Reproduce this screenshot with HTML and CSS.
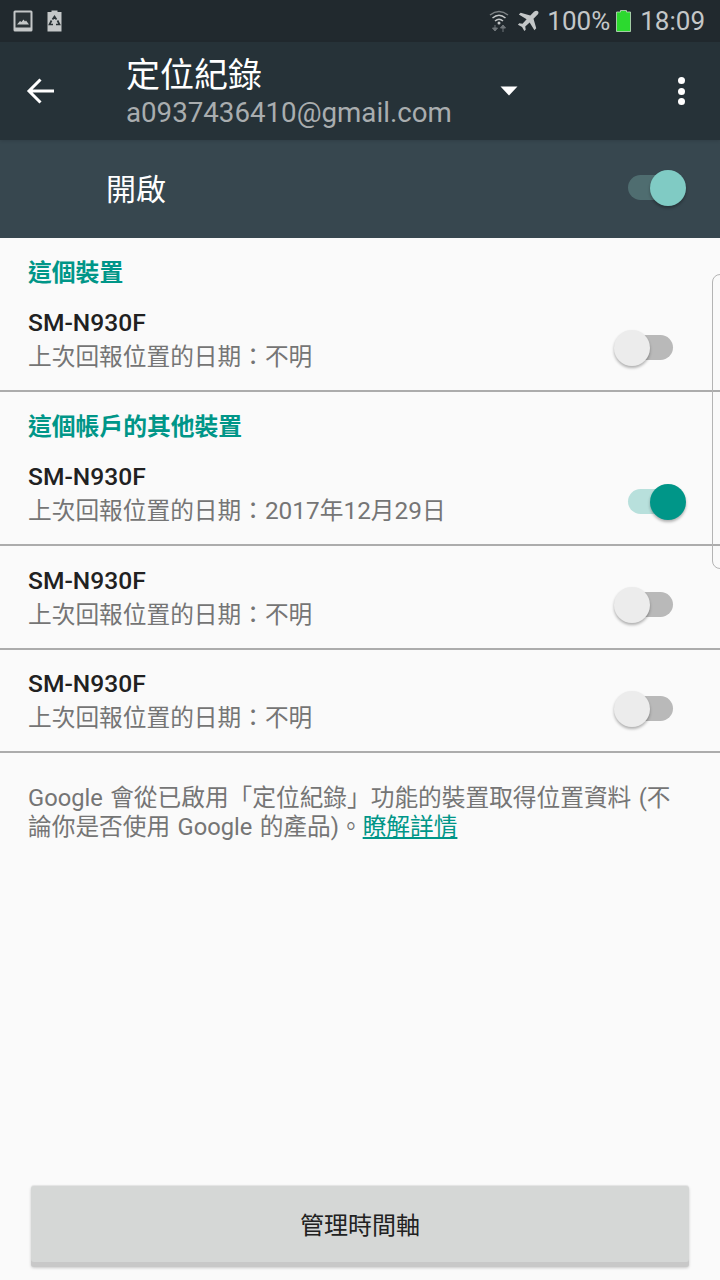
FILE: index.html
```html
<!DOCTYPE html>
<html lang="zh-Hant">
<head>
<meta charset="utf-8">
<title>定位紀錄</title>
<link rel="stylesheet" href="styles.css">
</head>
<body>
<div class="screen">
  <div class="statusbar">
    <div class="status-left">
      <svg class="ic-photo" width="20" height="22" viewBox="0 0 20 22"><rect x="0.500" y="0.500" width="19" height="21" rx="1.500" fill="#c4c7c8"/><rect x="2.500" y="2.500" width="15" height="15" fill="#2a3236"/><path d="M4 14.500 L7 11 L8.500 12 L10.500 9.500 L12 11.500 L13 10.500 L16 14.500Z" fill="#c4c7c8"/></svg>
      <svg class="ic-batt" width="15" height="22" viewBox="0 0 15 22"><path d="M4.500 0.500h6v1.500h4v19.500h-14v-19.500h4z" fill="#c4c7c8"/><path d="M5.500 9.500L7.500 6.500L9.500 9.500M10.500 10.500L12.500 14.500H9M6 14.500H2.500L4.500 10.500" fill="none" stroke="#2a3236" stroke-width="1.700"/></svg>
    </div>
    <div class="status-right">
      <svg class="ic-wifi" width="20" height="24" viewBox="0 0 20 24"><path d="M1 6 Q10 -1 19 6" fill="none" stroke="#7d8285" stroke-width="1.500"/><path d="M3.500 9 Q10 3.500 16.500 9" fill="none" stroke="#c4c7c8" stroke-width="1.500"/><path d="M6 12 Q10 8.500 14 12" fill="none" stroke="#c4c7c8" stroke-width="1.500"/><circle cx="10" cy="14" r="1.500" fill="#c4c7c8"/><path d="M6 16v5M3.500 19l2.500 3 2.500-3z" fill="#70767a" stroke="#70767a"/><path d="M14 23v-5M11.500 19l2.500-3 2.500 3z" fill="#70767a" stroke="#70767a"/></svg>
      <svg class="ic-plane" width="22" height="22" viewBox="0 0 24 24"><path d="M23 1.500c-1-1-3.200-.8-4.500.5l-4 4L4 3 2 5l8.500 5.200L6 15l-3.500-.5L1 16l4.500 2.500L8 23l1.500-1.500L9 18l4.800-4.500L19 22l2-2-3-10.500 4-4c1.300-1.300 2-3 1-4z" fill="#c4c7c8"/></svg>
      <span class="status-pct">100%</span>
      <svg class="ic-charge" width="15" height="22" viewBox="0 0 15 22"><path d="M4.500 0.500h6v1.500h4v19.500h-14v-19.500h4z" fill="#2cd92f" stroke="#c4e0c4" stroke-width="0.800"/></svg>
      <span class="status-time">18:09</span>
    </div>
  </div>

  <header class="toolbar">
    <svg class="ic-back" width="30" height="28" viewBox="0 0 30 28"><path d="M28 14H4M14.500 2.500L3 14l11.500 11.500" fill="none" stroke="#fff" stroke-width="3"/></svg>
    <div class="titles">
      <div class="title">定位紀錄</div>
      <div class="subtitle">a0937436410@gmail.com</div>
    </div>
    <svg class="ic-drop" width="18" height="10" viewBox="0 0 18 10"><path d="M0.500 0.500h17L9 9.500z" fill="#fff"/></svg>
    <div class="more"><i></i><i></i><i></i></div>
  </header>

  <div class="masterbar">
    <span class="master-label">開啟</span>
    <span class="switch switch-master"><span class="thumb"></span></span>
  </div>

  <main class="content">
    <h2 class="section">這個裝置</h2>
    <div class="row row-first">
      <div class="row-text">
        <div class="device">SM-N930F</div>
        <div class="date">上次回報位置的日期：不明</div>
      </div>
      <span class="switch switch-off"><span class="thumb"></span></span>
    </div>

    <h2 class="section">這個帳戶的其他裝置</h2>
    <div class="row row-first">
      <div class="row-text">
        <div class="device">SM-N930F</div>
        <div class="date">上次回報位置的日期：<span class="num">2017</span>年<span class="num">12</span>月<span class="num">29</span>日</div>
      </div>
      <span class="switch switch-on"><span class="thumb"></span></span>
    </div>
    <div class="row">
      <div class="row-text">
        <div class="device">SM-N930F</div>
        <div class="date">上次回報位置的日期：不明</div>
      </div>
      <span class="switch switch-off"><span class="thumb"></span></span>
    </div>
    <div class="row">
      <div class="row-text">
        <div class="device">SM-N930F</div>
        <div class="date">上次回報位置的日期：不明</div>
      </div>
      <span class="switch switch-off"><span class="thumb"></span></span>
    </div>

    <p class="note">Google 會從已啟用「定位紀錄」功能的裝置取得位置資料 (不論你是否使用 Google 的產品)。<a class="link" href="#">瞭解詳情</a></p>
  </main>

  <div class="footer">
    <button class="action" type="button">管理時間軸</button>
  </div>

  <div class="edge-handle"></div>
</div>
</body>
</html>
```
FILE: styles.css
```css
* { box-sizing: border-box; }
html, body { margin: 0; padding: 0; }
body {
  width: 720px;
  height: 1280px;
  overflow: hidden;
  font-family: Roboto, "Noto Sans CJK TC", sans-serif;
  background: #fafafa;
}
.screen {
  position: relative;
  width: 720px;
  height: 1280px;
  display: flex;
  flex-direction: column;
  background: #fafafa;
}
.statusbar {
  height: 42px;
  flex: none;
  background: #21292e;
  display: flex;
  justify-content: space-between;
  align-items: center;
  padding: 0 15px 0 13px;
  color: #c4c7c8;
}
.status-left { display: flex; align-items: center; gap: 14px; }
.status-right { display: flex; align-items: center; }
.status-pct { font-size: 26px; margin-left: 8px; line-height: 42px; }
.status-time { font-size: 26px; margin-left: 9px; line-height: 42px; }
.ic-charge { margin-left: 6px; }
.ic-plane { margin-left: 6px; }
.ic-wifi { margin-right: 2px; }
.toolbar {
  height: 98px;
  flex: none;
  background: #263238;
  display: flex;
  align-items: center;
  padding: 0 35px 0 26px;
  position: relative;
  z-index: 1;
  box-shadow: 0 1px 3px rgba(0,0,0,.12);
}
.titles { margin-left: 70px; width: 373px; padding-top: 3px; }
.title { font-size: 34px; line-height: 41px; color: #fff; }
.subtitle { font-size: 27.700px; line-height: 34px; color: #a9adaf; white-space: nowrap; }
.ic-drop { margin-left: 1px; }
.more { margin-left: auto; display: flex; flex-direction: column; gap: 3.500px; }
.more i { display: block; width: 7px; height: 7px; border-radius: 50%; background: #fff; }
.masterbar {
  height: 98px;
  flex: none;
  background: #37474f;
  display: flex;
  align-items: center;
  justify-content: space-between;
  padding: 0 47px 0 106px;
}
.master-label { font-size: 30px; color: #fff; padding-bottom: 4px; }
.switch {
  position: relative;
  display: block;
  width: 45px;
  height: 25px;
  border-radius: 13px;
  flex: none;
  margin-top: 16px;
}
.thumb {
  position: absolute;
  top: -5px;
  width: 36px;
  height: 36px;
  border-radius: 50%;
  box-shadow: 0 2px 3px rgba(0,0,0,.3);
}
.switch-master { background: #4f6d70; margin-top: 0; margin-bottom: 4px; }
.switch-master .thumb { right: -13px; background: #80cbc4; }
.switch-on { background: #b8e0dc; }
.switch-on .thumb { right: -13px; background: #009688; }
.switch-off { background: #b9b9b9; }
.switch-off .thumb { left: -14px; background: #ececec; }
.content { flex: 1; }
.section {
  margin: 0;
  padding: 20px 0 0 28px;
  height: 53px;
  font-size: 23.800px;
  line-height: 30px;
  font-weight: 700;
  color: #009688;
}
.row {
  height: 103.500px;
  display: flex;
  justify-content: space-between;
  align-items: center;
  padding: 0 47px 0 28px;
  border-bottom: 2px solid #acacac;
}
.row-text { padding-top: 2px; }
.row-first { height: 101px; }
.row-first .switch { margin-top: 13px; }
.row-first .row-text { padding-bottom: 3px; }
.device { font-size: 24.600px; line-height: 34px; font-weight: 500; color: #212121; }
.date { font-size: 23.700px; line-height: 34px; color: #757575; }
.num { font-size: 24.400px; }
.note {
  margin: 31px 40px 0 28px;
  font-size: 23.700px;
  word-spacing: 1.500px;
  line-height: 29px;
  color: #757575;
}
.link { color: #009688; text-decoration: underline; }
.footer {
  flex: none;
  height: 95px;
  padding: 1px 31px 0;
}
.action {
  display: block;
  width: 658px;
  height: 81px;
  padding: 0 0 7px;
  border: 0;
  border-radius: 3px;
  background: #d5d7d6;
  box-shadow: 0 -1px 1px #e4e4e4, 0 1px 3px rgba(0,0,0,.2), inset 0 -5px 0 #c8c8c8;
  font-family: inherit;
  font-size: 24px;
  color: #212121;
}
.edge-handle {
  position: absolute;
  left: 712px;
  top: 274px;
  width: 12px;
  height: 295px;
  border: 1px solid #b4b4b4;
  border-radius: 8px 0 0 8px;
}
```
